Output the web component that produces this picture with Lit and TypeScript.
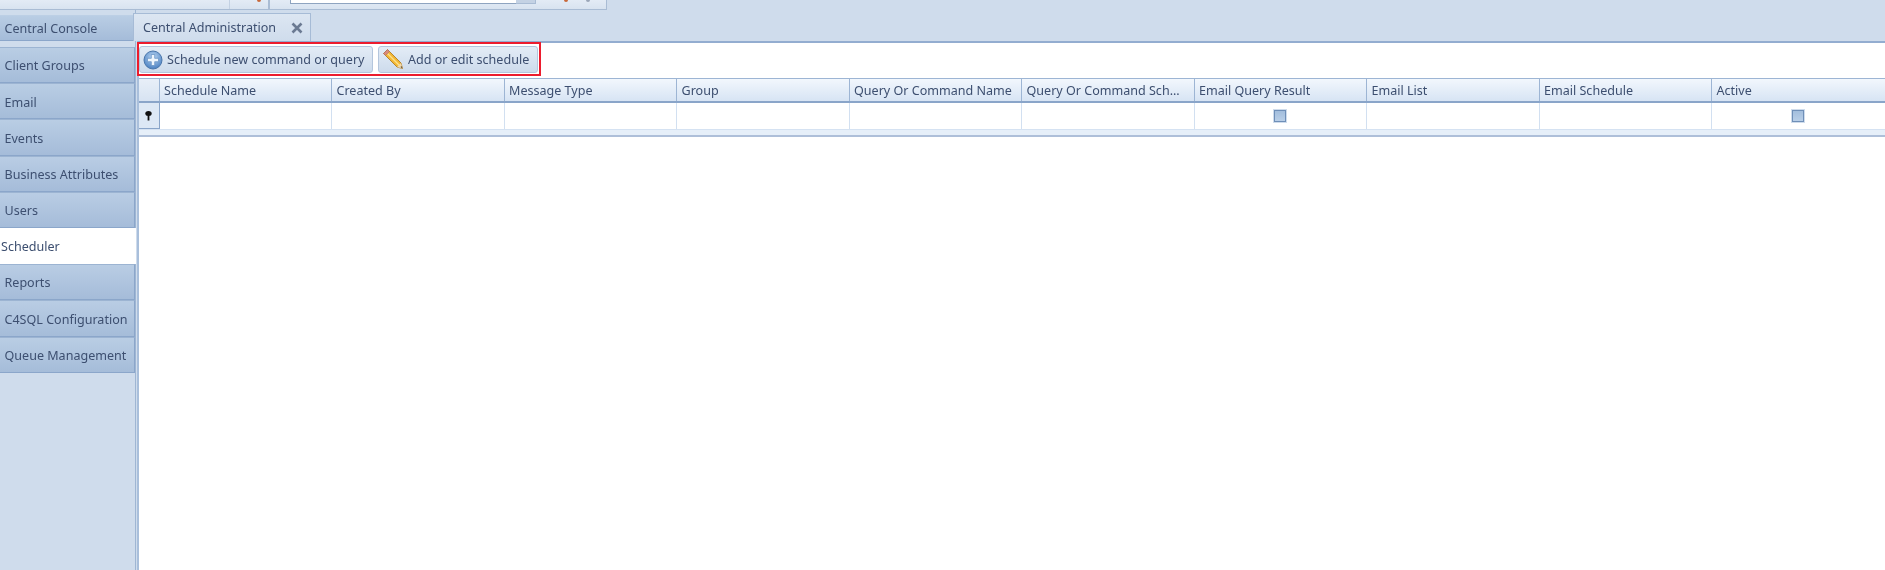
import { LitElement, html, css } from "lit";
import { customElement } from "lit/decorators.js";

const navItems = [
  "Central Console",
  "Client Groups",
  "Email",
  "Events",
  "Business Attributes",
  "Users",
  "Scheduler",
  "Reports",
  "C4SQL Configuration",
  "Queue Management",
];

const columns = [
  "Schedule Name",
  "Created By",
  "Message Type",
  "Group",
  "Query Or Command Name",
  "Query Or Command Sch...",
  "Email Query Result",
  "Email List",
  "Email Schedule",
  "Active",
];

const checkboxColumns = ["Email Query Result", "Active"];

@customElement("app-root")
export class AppRoot extends LitElement {
  static styles = css`
    :host {
      display: block;
      width: 1885px;
      height: 570px;
      overflow: hidden;
      background: #cfdcec;
      font-family: "Noto Sans", "Liberation Sans", sans-serif;
      font-size: 12.55px;
      color: #3d4f70;
      filter: blur(0.35px);
    }
    .topbar {
      display: flex;
      align-items: flex-start;
      width: 607px;
      height: 10px;
      box-sizing: border-box;
      border-right: 1px solid #a9bcd4;
      border-bottom: 1px solid #a9bcd4;
      background: linear-gradient(#e3ebf5, #d8e3f0);
    }
    .topsep {
      width: 1px;
      height: 9px;
      background: #c3d1e3;
    }
    .topsep.strong {
      width: 2px;
      background: #a9bcd4;
    }
    .dot {
      width: 4px;
      height: 2px;
      background: #c8683a;
      border-radius: 0 0 2px 2px;
    }
    .dot.grey {
      background: #9aa6b8;
    }
    .search {
      width: 225px;
      height: 3px;
      box-sizing: content-box;
      background: #fff;
      border-bottom: 1px solid #8ea4c0;
      border-left: 1px solid #8ea4c0;
    }
    .drop {
      width: 19px;
      height: 3px;
      background: #c4d2e4;
      border-bottom: 1px solid #a9bcd4;
      border-right: 1px solid #a9bcd4;
    }
    .main {
      display: flex;
      height: 560px;
    }
    .nav {
      width: 136px;
      flex: none;
      box-sizing: border-box;
      padding-top: 5px;
      border-right: 1px solid #9fb6d3;
    }
    .nav-item {
      height: 36.2px;
      box-sizing: border-box;
      padding: 1.5px 0 0 4.5px;
      display: flex;
      align-items: center;
      white-space: nowrap;
      background: linear-gradient(#b9cde4, #a5bcd9);
      border-top: 1px solid #9cb4d2;
      border-bottom: 1px solid #8ba6ca;
      border-right: 1px solid #8ba6ca;
    }
    .nav-item:first-child {
      height: 26px;
      margin-bottom: 6px;
      border-top-color: #bccfe5;
    }
    .nav-item.active {
      background: #fff;
      border: 0;
      padding: 0 0 0 1px;
      margin-right: -1px;
    }
    .side {
      flex: 1;
      min-width: 0;
      display: flex;
      flex-direction: column;
    }
    .tabs {
      height: 31px;
      flex: none;
      box-sizing: border-box;
      padding-top: 3px;
      margin-left: -3px;
    }
    .tab {
      width: 178px;
      height: 28px;
      box-sizing: border-box;
      display: flex;
      align-items: center;
      justify-content: space-between;
      padding: 0 7px 0 9px;
      background: linear-gradient(#dce6f2, #cfdcec);
      border: 1px solid #a6bbd6;
      border-bottom: 0;
    }
    .content {
      flex: 1;
      margin-left: 1px;
      background: #fff;
      border-top: 2px solid #93add0;
      border-left: 2px solid #a9bfdb;
    }
    .toolbar {
      height: 35px;
      box-sizing: border-box;
    }
    .highlight {
      display: inline-flex;
      gap: 5px;
      box-sizing: border-box;
      width: 404px;
      height: 34px;
      margin: -1px 0 0 -2px;
      padding: 2px 0 0 0;
      border: 2px solid #ec1c2e;
      vertical-align: top;
    }
    .btn {
      height: 27px;
      box-sizing: border-box;
      display: flex;
      align-items: center;
      gap: 4px;
      padding: 0 0 0 3px;
      border: 1px solid #b4c6dd;
      border-radius: 3px;
      background: linear-gradient(#e3ecf6, #cddbec);
      white-space: nowrap;
    }
    .btn.first {
      width: 234px;
    }
    .btn.second {
      width: 160px;
      padding-left: 4px;
      gap: 5px;
    }
    .grid-row {
      display: grid;
      grid-template-columns: 20.5px repeat(10, 172.5px);
    }
    .head {
      border-top: 1px solid #9db5d4;
      border-bottom: 2px solid #8aa5c9;
      height: 22px;
      background: linear-gradient(#f2f7fd, #d7e4f4);
    }
    .head > div {
      display: flex;
      align-items: center;
      padding-left: 4.5px;
      white-space: nowrap;
      overflow: hidden;
      border-right: 1px solid #9db5d4;
    }
    .head > div:first-child {
      background: linear-gradient(#e8eff8, #d7e3f2);
    }
    .head > div:last-child {
      border-right: 0;
    }
    .filter {
      height: 26px;
      box-sizing: border-box;
    }
    .filter > div {
      display: flex;
      align-items: center;
      justify-content: center;
      border-right: 1px solid #d2e0f1;
    }
    .filter > div:first-child {
      background: #dde8f5;
      border-right: 1px solid #8aa5c9;
      border-bottom: 1px solid #8aa5c9;
    }
    .filter > div:last-child {
      border-right: 0;
    }
    .check {
      width: 10px;
      height: 10px;
      border: 1px solid #6f8fb8;
      outline: 1px solid #cfdcec;
      background: linear-gradient(#a3bedd, #b9cfe8);
    }
    .foot {
      height: 5px;
      background: #e6eff9;
      border-top: 1px solid #d5e2f2;
      border-bottom: 2px solid #aebfd9;
    }
  `;

  render() {
    return html`
      <div class="topbar">
        <div style="width:229px"></div>
        <div class="topsep"></div>
        <div style="width:27px"></div>
        <div class="dot"></div>
        <div style="width:7px"></div>
        <div class="topsep strong"></div>
        <div style="width:20px"></div>
        <div class="search"></div>
        <div class="drop"></div>
        <div style="width:28px"></div>
        <div class="dot"></div>
        <div style="width:18px"></div>
        <div class="dot grey"></div>
      </div>
      <div class="main">
        <div class="nav">
          ${navItems.map(
            (n) => html`<div class="nav-item ${n === "Scheduler" ? "active" : ""}">${n}</div>`
          )}
        </div>
        <div class="side">
          <div class="tabs">
            <div class="tab">
              <span>Central Administration</span>
              <svg width="12" height="12" viewBox="0 0 12 12">
                <path d="M1.5 1.5l9 9M10.5 1.5l-9 9" stroke="#6b7a92" stroke-width="2.6" fill="none" />
              </svg>
            </div>
          </div>
          <div class="content">
            <div class="toolbar">
              <div class="highlight">
                <div class="btn first">
                  <svg width="20" height="20" viewBox="0 0 20 20">
                    <defs>
                      <radialGradient id="g" cx="50%" cy="35%" r="65%">
                        <stop offset="0" stop-color="#bdd8f3" />
                        <stop offset="1" stop-color="#4a80c2" />
                      </radialGradient>
                    </defs>
                    <circle cx="10" cy="10" r="9" fill="url(#g)" stroke="#4a76ab" />
                    <path d="M8.3 4.5h3.4v3.8h3.8v3.4h-3.8v3.8H8.3v-3.8H4.5V8.3h3.8z" fill="#eef5fc" stroke="#5f8dc2" stroke-width=".7" />
                  </svg>
                  Schedule new command or query
                </div>
                <div class="btn second">
                  <svg width="20" height="21" viewBox="0 0 20 21">
                    <path d="M4.5.5L.5 4.5 14 18l5.5 1.5L18 14z" fill="#f3b733" stroke="#a8741a" stroke-width=".8" />
                    <path d="M3 3l13.5 13.5" stroke="#fbe08a" stroke-width="1.4" />
                    <path d="M4.5.5L.5 4.5 2.5 6.5l4-4z" fill="#d9897a" stroke="#a8685a" stroke-width=".5" />
                    <path d="M14 18l4-4 1.5 5.5z" fill="#f0d9ae" />
                    <path d="M17.5 18l1-1 1 2.5z" fill="#4a3a2a" />
                  </svg>
                  Add or edit schedule
                </div>
              </div>
            </div>
            <div class="grid-row head">
              <div></div>
              ${columns.map((c) => html`<div>${c}</div>`)}
            </div>
            <div class="grid-row filter">
              <div>
                <svg width="7" height="10" viewBox="0 0 7 10">
                  <ellipse cx="3.5" cy="2.6" rx="3.2" ry="2.5" fill="#111" />
                  <rect x="2.6" y="4" width="1.8" height="5.5" fill="#111" />
                </svg>
              </div>
              ${columns.map(
                (c) => html`<div>${checkboxColumns.includes(c) ? html`<span class="check"></span>` : ""}</div>`
              )}
            </div>
            <div class="foot"></div>
          </div>
        </div>
      </div>
    `;
  }
}
